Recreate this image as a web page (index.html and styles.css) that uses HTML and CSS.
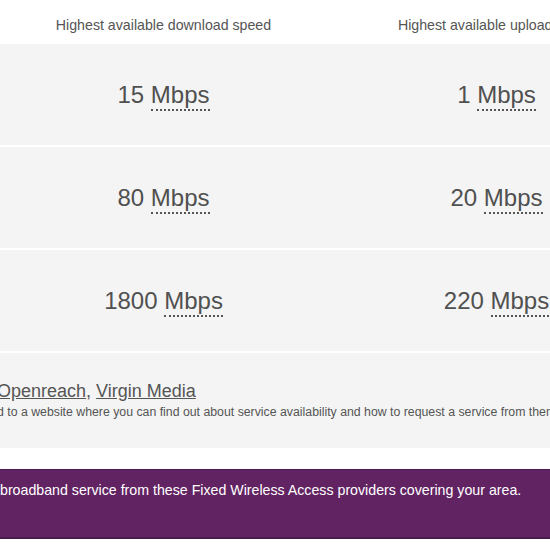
FILE: index.html
```html
<!DOCTYPE html>
<html lang="en">
<head>
    <meta charset="UTF-8">
    <meta name="viewport" content="width=device-width, initial-scale=1.0">
    <title>Broadband coverage</title>
    <link rel="stylesheet" href="styles.css">
</head>
<body>
    <div class="page">
        <div class="speeds">
            <div class="row head">
                <div class="label"></div>
                <div class="col">Highest available download speed</div>
                <div class="col">Highest available upload speed</div>
            </div>
            <div class="row">
                <div class="label">Standard broadband</div>
                <div class="col speed">15 <abbr title="Megabits per second">Mbps</abbr></div>
                <div class="col speed">1 <abbr title="Megabits per second">Mbps</abbr></div>
            </div>
            <div class="row">
                <div class="label">Superfast broadband</div>
                <div class="col speed">80 <abbr title="Megabits per second">Mbps</abbr></div>
                <div class="col speed">20 <abbr title="Megabits per second">Mbps</abbr></div>
            </div>
            <div class="row">
                <div class="label">Ultrafast broadband</div>
                <div class="col speed">1800 <abbr title="Megabits per second">Mbps</abbr></div>
                <div class="col speed">220 <abbr title="Megabits per second">Mbps</abbr></div>
            </div>
            <div class="row providers">
                <div class="label">Providers</div>
                <div class="wide">
                    <p class="links"><a href="#">Openreach</a>, <a href="#">Virgin Media</a></p>
                    <p class="hint">d to a website where you can find out about service availability and how to request a service from them.</p>
                </div>
            </div>
        </div>

        <div class="banner">
            <div class="label"></div>
            <p class="wide">broadband service from these Fixed Wireless Access providers covering your area.</p>
        </div>
    </div>
</body>
</html>
```

FILE: styles.css
```css
body {
    margin: 0;
    font-family: "Liberation Sans", Arial, sans-serif;
    color: #555;
    background-color: #fff;
    overflow: hidden;
}

.page {
    width: 866px;
    margin-left: -203px;
}

.speeds {
    display: flex;
    flex-direction: column;
    gap: 2px;
}

.row {
    display: grid;
    grid-template-columns: 200px 333px 333px;
    align-items: center;
    height: 101px;
    background-color: #f4f4f4;
}

.row.head {
    height: auto;
    align-items: start;
    padding: 17px 0 9px;
    background-color: #fff;
    font-size: 14.2px;
    line-height: 16px;
}

.label {
    visibility: hidden;
}

.col {
    text-align: center;
}

.speed {
    font-size: 24px;
    line-height: 28px;
    color: #505050;
}

.speed abbr {
    text-decoration: none;
    border-bottom: 2px dotted #555;
    padding-bottom: 1px;
}

.row.providers {
    height: auto;
    padding: 27px 0 28px;
}

.wide {
    grid-column: 2 / 4;
    margin: 0;
}

.links {
    margin: 0 0 2px;
    font-size: 18px;
    line-height: 22px;
}

.links a {
    color: #555;
}

.hint {
    margin: 0;
    font-size: 12.3px;
    line-height: 16px;
    white-space: nowrap;
}

.banner {
    display: grid;
    grid-template-columns: 200px 666px;
    margin-top: 21px;
    padding: 12px 0 39px;
    background-color: #622363;
    border-top: 1px solid #4e1a4f;
    border-bottom: 2px solid #4b1a4c;
    box-shadow: 0 2px 0 #efd3ef;
    color: #fff;
}

.banner .wide {
    padding-left: 3px;
    font-size: 14.2px;
    line-height: 16px;
    white-space: nowrap;
}
```
